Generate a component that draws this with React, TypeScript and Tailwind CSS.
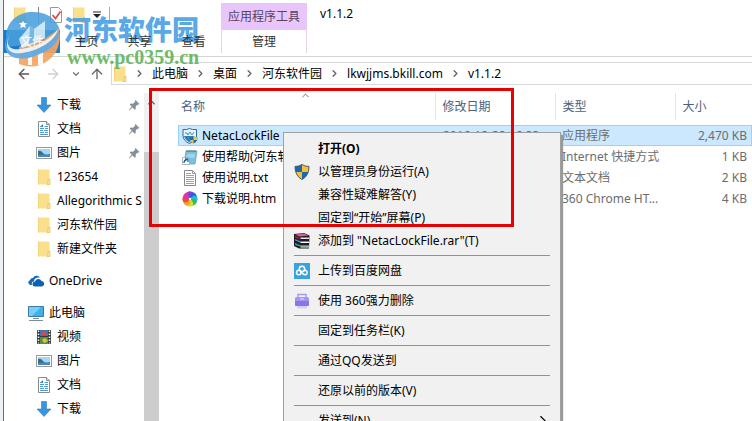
import React from "react";
import { ArrowLeft, ArrowRight, ArrowUp, ChevronDown, ChevronRight, ChevronUp } from "lucide-react";

type IconType = () => React.ReactElement;

const quickAccess: { label: string; icon: IconType; pinned?: boolean }[] = [
  { label: "下载", icon: DownloadIcon, pinned: true },
  { label: "文档", icon: DocumentIcon, pinned: true },
  { label: "图片", icon: PictureIcon, pinned: true },
  { label: "123654", icon: FolderIcon },
  { label: "Allegorithmic S", icon: FolderIcon },
  { label: "河东软件园", icon: FolderIcon },
  { label: "新建文件夹", icon: FolderIcon },
];

const thisPc: { label: string; icon: IconType }[] = [
  { label: "视频", icon: VideoIcon },
  { label: "图片", icon: PictureIcon },
  { label: "文档", icon: DocumentIcon },
  { label: "下载", icon: DownloadIcon },
];

const crumbs = ["此电脑", "桌面", "河东软件园", "lkwjjms.bkill.com", "v1.1.2"];

const files = [
  { name: "NetacLockFile", date: "2016-12-28 16:33", type: "应用程序", size: "2,470 KB", icon: AppIcon, selected: true },
  { name: "使用帮助(河东软件园)", date: "", type: "Internet 快捷方式", size: "1 KB", icon: ShortcutIcon },
  { name: "使用说明.txt", date: "", type: "文本文档", size: "2 KB", icon: TextIcon },
  { name: "下载说明.htm", date: "", type: "360 Chrome HT...", size: "4 KB", icon: PinwheelIcon },
];

const menuGroups: { label: string; icon?: IconType; bold?: boolean; submenu?: boolean }[][] = [
  [
    { label: "打开(O)", bold: true },
    { label: "以管理员身份运行(A)", icon: ShieldIcon },
    { label: "兼容性疑难解答(Y)" },
    { label: "固定到“开始”屏幕(P)" },
    { label: "添加到 \"NetacLockFile.rar\"(T)", icon: RarIcon },
  ],
  [{ label: "上传到百度网盘", icon: CloudIcon }],
  [{ label: "使用 360强力删除", icon: ShredIcon }],
  [{ label: "固定到任务栏(K)" }],
  [{ label: "通过QQ发送到" }],
  [{ label: "还原以前的版本(V)" }],
  [{ label: "发送到(N)", submenu: true }],
];

export default function App() {
  return (
    <div className="relative flex h-screen overflow-hidden bg-[#edf1f3] pl-[3px] font-['Noto_Sans','Noto_Sans_CJK_SC',sans-serif] text-xs text-black">
      <div className="flex min-w-0 flex-1 flex-col border-l border-[#1883d7] bg-white">
        <Ribbon />
        <AddressBar />
        <div className="flex min-h-0 flex-1 pt-2">
          <Sidebar />
          <FileList />
        </div>
      </div>

      <Watermark />
      <ContextMenu />
      {/* highlighted area */}
      <div className="pointer-events-none absolute top-[88px] left-[149px] h-[139px] w-[365px] border-3 border-[#e60000]" />
    </div>
  );
}

/* Window chrome */
function Ribbon() {
  return (
    <header className="shrink-0 border-b border-[#d5d5d5]">
      <div className="flex h-[30px]">
        <div className="flex w-[217px] items-center pl-2">
          <FolderIcon />
          <span className="ml-2.5 h-4 w-px bg-[#888]" />
          <span className="ml-2.5"><CheckPageIcon /></span>
          <span className="ml-2"><FolderIcon /></span>
          <svg className="ml-1.5" width="8" height="8" viewBox="0 0 8 8">
            <path d="M0 1h8" stroke="#222" />
            <path d="M0 3h8L4 7z" fill="#222" />
          </svg>
          <span className="ml-2 h-4 w-px bg-[#aaa]" />
        </div>
        <div className="mt-[3px] flex w-[86px] items-center justify-center bg-[#e8c6fb] text-[#54425f]">应用程序工具</div>
        <h1 className="pt-[6px] pl-[13px]">v1.1.2</h1>
      </div>
      <nav className="flex h-[26px] items-start text-[#333]">
        <button className="h-[23px] w-14 bg-[#1979ca] text-white"><span className="relative z-10">文件</span></button>
        <button className="relative z-10 h-[23px] w-[53px]">主页</button>
        <button className="relative z-10 h-[23px] w-[53px]">共享</button>
        <button className="relative z-10 h-[23px] w-[55px]">查看</button>
        <button className="h-[23px] w-[86px] border-x border-[#e3d3ec]">管理</button>
      </nav>
    </header>
  );
}

function AddressBar() {
  return (
    <div className="mt-[5px] flex h-[23px] shrink-0 items-center pl-3">
      <button aria-label="后退" className="text-[#555]"><ArrowLeft size={16} /></button>
      <button aria-label="前进" className="ml-[13px] text-[#d0d0d0]"><ArrowRight size={16} /></button>
      <button aria-label="历史" className="ml-[10px] text-[#777]"><ChevronDown size={10} strokeWidth={3} /></button>
      <button aria-label="上移" className="ml-2 text-[#666]"><ArrowUp size={16} /></button>
      <ol className="ml-[6px] flex h-full min-w-0 flex-1 items-center border-y border-l border-[#d9d9d9]">
        <li className="w-[15px]"><FolderIcon /></li>
        {crumbs.map((c) => (
          <li key={c} className="flex items-center whitespace-nowrap">
            <ChevronRight className="mx-[7px] text-[#666]" size={11} strokeWidth={3} />
            <a href="#">{c}</a>
          </li>
        ))}
      </ol>
    </div>
  );
}

function Sidebar() {
  return (
    <aside className="flex w-[155px] shrink-0">
      <div className="min-w-0 flex-1 overflow-hidden">
        <div>
          {quickAccess.map((item) => (
            <SideItem key={item.label} {...item} nested />
          ))}
        </div>
        <div className="my-2"><SideItem label="OneDrive" icon={OneDriveIcon} /></div>
        <div>
          <SideItem label="此电脑" icon={ComputerIcon} />
          {thisPc.map((item) => (
            <SideItem key={item.label} {...item} nested />
          ))}
        </div>
      </div>
      <div className="flex w-[15px] flex-col bg-[#f0f0f0]">
        <div className="flex h-[59px] justify-center pt-1"><ChevronUp size={11} strokeWidth={3} color="#555" /></div>
        <div className="flex-1 bg-[#cdcdcd]" />
      </div>
    </aside>
  );
}

function SideItem({ label, icon: Icon, pinned, nested }: { label: string; icon: IconType; pinned?: boolean; nested?: boolean }) {
  return (
    <a href="#" className={`flex h-6 items-center gap-[5px] whitespace-nowrap ${nested ? "pl-8" : "pl-6"}`}>
      <Icon />
      <span>{label}</span>
      {pinned && <span className="mr-1 ml-auto"><PinIcon /></span>}
    </a>
  );
}

function FileList() {
  return (
    <main className="relative min-w-0 flex-1 pl-[19px]">
      <table className="w-full table-fixed border-collapse">
        <thead>
          <tr className="h-[27px] text-left text-[#4c607a]">
            <th className="w-[257px] pl-[3px] font-normal">名称</th>
            <th className="w-[120px] border-l border-[#e5e5e5] pl-[7px] font-normal">修改日期</th>
            <th className="w-[120px] border-l border-[#e5e5e5] pl-[7px] font-normal">类型</th>
            <th className="border-l border-[#e5e5e5] pl-[7px] font-normal">大小</th>
          </tr>
          <tr className="h-[5px]" />
        </thead>
        <tbody>
          {files.map(({ icon: Icon, ...f }) => (
            <tr key={f.name} className={`h-[21px] text-[#6d6d6d] ${f.selected ? "bg-[#cce8ff] outline -outline-offset-1 outline-[#99d1ff]" : ""}`}>
              <td className="overflow-hidden py-0 pl-1 text-black">
                <div className="flex items-center gap-1 whitespace-nowrap"><Icon />{f.name}</div>
              </td>
              <td className="pl-2 whitespace-nowrap">{f.date}</td>
              <td className="pl-[7px] whitespace-nowrap">{f.type}</td>
              <td className="pr-[5px] text-right whitespace-nowrap">{f.size}</td>
            </tr>
          ))}
        </tbody>
      </table>
      <ChevronUp className="absolute -top-[3px] left-[141px]" size={11} color="#666" />
    </main>
  );
}

function ContextMenu() {
  return (
    <div role="menu" className="absolute top-[132px] left-[283px] w-[278px] border border-[#a0a0a0] bg-[#f1f1f1] py-1 shadow-[2px_3px_1px_#999]">
      {menuGroups.map((group, i) => (
        <div key={i}>
          {i > 0 && <div className="mx-[10px] flex h-[7px] items-center"><span className="h-px w-full bg-[#919191]" /></div>}
          {group.map(({ icon: Icon, ...m }) => (
            <button key={m.label} role="menuitem" className={`flex h-[23px] w-full items-center pr-2 pl-[10px] text-left whitespace-nowrap ${m.bold ? "font-bold" : ""}`}>
              <span className="w-6">{Icon && <Icon />}</span>
              <span>{m.label}</span>
              {m.submenu && <ChevronRight className="ml-auto" size={18} strokeWidth={1.5} />}
            </button>
          ))}
        </div>
      ))}
    </div>
  );
}

function Watermark() {
  return (
    <div className="pointer-events-none absolute top-[9px] left-1 flex gap-[3px]">
      <svg width="57" height="59" viewBox="0 0 57 59">
        {/* dome */}
        <path d="M2 25C4 11 15 3 29 3s24 7 27 19L44 29 20 36 4 38z" fill="#4a9fdc" fillOpacity="0.88" />
        {/* base */}
        <path d="M55 20c3 15-3 27-13 33-9 6-19 5-27 2V38l24-7z" fill="#f3a562" fillOpacity="0.92" />
        <path d="M24 44h4v12h-4zM34 43h5v13h-5z" fill="#fff" fillOpacity="0.9" />
        {/* towers */}
        <path d="m15 30 11-13 4 3 11-8v17l-8 5-15 5z" fill="#f4f9fd" fillOpacity="0.75" />
        <path d="m26 17 4 3v13l-5 2z" fill="#5ca8de" fillOpacity="0.75" />
        {/* orbit */}
        <path d="M6 25C-2 36 3 43 17 42c16-1 34-10 37-21 4 12-9 22-26 27C13 52 1 48 1 36c0-5 2-8 5-11z" fill="#64aae1" fillOpacity="0.95" />
        <path d="M7 25C0 35 5 42 17 40c16-2 30-10 37-20-3 13-21 22-36 24C3 46-1 36 7 25z" fill="#f2f8fd" fillOpacity="0.9" />
        <path d="m19 12 1.300 2 2.700.3-2 2 .8 2.700-2.800-1.300-2.800 1.300.8-2.700-2-2 2.700-.3z" fill="#fff" />
      </svg>
      <div className="pt-[5px]">
        <div className="text-[27px] leading-8 font-black text-[#4a9fe5] opacity-90">河东软件园</div>
        <div className="pl-[3px] font-['Liberation_Serif',serif] text-[20px] leading-[22px] font-bold text-[#60b558] opacity-90">www.pc0359.cn</div>
      </div>
    </div>
  );
}

/* Icons */
function FolderIcon() {
  return (
    <svg className="shrink-0" width="16" height="16" viewBox="0 0 16 16">
      <path d="M2 .5h11.500v15H2z" fill="#fbe08c" />
      <path d="M2 .5h1v15H2z" fill="#f3d47a" />
      <path d="M12 10.500h2v5h-3l1-1.500z" fill="#fbe8a8" stroke="#e3bd55" strokeWidth=".7" />
    </svg>
  );
}

function DownloadIcon() {
  return (
    <svg className="shrink-0" width="16" height="16" viewBox="0 0 16 16">
      <path d="M5.500.5h5V8H15l-7 7.500L1 8h4.500z" fill="#3c94dc" stroke="#2a7fc6" strokeWidth=".6" />
    </svg>
  );
}

function DocumentIcon() {
  return (
    <svg className="shrink-0" width="16" height="16" viewBox="0 0 16 16">
      <path d="M2.500.5h8l3 3v12h-11z" fill="#fff" stroke="#8b8b8b" />
      <path d="M10.500.5v3h3" fill="#ddd" stroke="#8b8b8b" />
      <path d="M4 5.500h3M8.500 5.500H12M4 7.500h4M9 7.500h3M4 9.500h3M8 9.500h4M4 11.500h4M9 11.500h3M4 13.500h8" stroke="#4d9bce" />
      <path d="M5 5 7 3v3z" fill="#367db0" />
    </svg>
  );
}

function PictureIcon() {
  return (
    <svg className="shrink-0" width="16" height="16" viewBox="0 0 16 16">
      <rect x=".5" y="2.500" width="15" height="11" fill="#fff" stroke="#999" />
      <rect x="2" y="4" width="12" height="8" fill="#a6d6f5" />
      <path d="M2 6q3-1 5 2t7 1v3H2z" fill="#376e82" />
      <path d="M2 10q5-1 12 0v2H2z" fill="#4a86c0" />
    </svg>
  );
}

function VideoIcon() {
  return (
    <svg className="shrink-0" width="16" height="16" viewBox="0 0 16 16">
      <path d="M1 1h14v14H1z" fill="#36383b" />
      <path d="M4 1h8v6H4z" fill="#3c78b9" />
      <path d="M4 8h8v7H4z" fill="#4d9444" />
      <path d="M5 4 8 2l3 4H6z" fill="#d94b4b" />
      <path d="m6 11 3-2 3 3-4 2z" fill="#e4bd43" />
      <path d="M2.500 1.500v13M13.500 1.500v13" stroke="#fff" strokeWidth="1.500" strokeDasharray="1.500 1.500" />
    </svg>
  );
}

function ComputerIcon() {
  return (
    <svg className="shrink-0" width="16" height="16" viewBox="0 0 16 16">
      <path d="M.5 1.500h15v10H.5z" fill="#43b0ea" stroke="#397ba6" />
      <path d="M1 2h12L4 11H1z" fill="#77cff6" />
      <path d="M5 13.500h6M1 15.500h14" stroke="#7c8c98" />
    </svg>
  );
}

function OneDriveIcon() {
  return (
    <svg className="shrink-0" width="16" height="16" viewBox="0 0 16 16">
      <path d="M4 12H2.500A2.500 2.500 0 0 1 2 7.200 3 3 0 0 1 5 5a4.200 4.200 0 0 1 7-.5C8 4 6 6 6.200 8 4 8.500 3.500 10 4 12z" fill="#1169b5" />
      <path d="M7 13.500a2.500 2.500 0 0 1 0-5 3.500 3.500 0 0 1 6.500-.5 2.800 2.800 0 0 1 .5 5.500z" fill="#0b62b0" />
    </svg>
  );
}

function PinIcon() {
  return (
    <svg width="11" height="11" viewBox="0 0 11 11">
      <path d="m6.500 0 4 4-1 .8-.8-.2-2 2 .1 2.200-1 1-2.300-2.300L.5 10.500 0 10l2.800-3.200L.7 4.600l1-1 2.300.1 2-2L5.800 1z" fill="#84919c" />
    </svg>
  );
}

function CheckPageIcon() {
  return (
    <svg width="14" height="16" viewBox="0 0 14 16">
      <path d="M1.500.5h8l3 3v12h-11z" fill="#fff" stroke="#999" />
      <path d="m3.500 8 3 3.500 5-7" fill="none" stroke="#d65344" strokeWidth="1.800" />
    </svg>
  );
}

function AppIcon() {
  return (
    <svg className="shrink-0" width="16" height="16" viewBox="0 0 16 16">
      <path d="M1 1.500Q5 2 7.500.5 10 2 14.500 1.500V8q-1 5-7 7.500Q1.500 13 1 8z" fill="#e9f4fb" stroke="#286b9d" />
      <path d="M2 8h10l-4 6.500Q3 12 2 8z" fill="#2b83bc" />
      <path d="M3 5h2l1 2 2-3 2 3 2-3" fill="none" stroke="#4b8db9" />
      <path d="M8 9.500q2 0 3.500-1.500Q13 9.500 15.500 9.500q0 4.500-4 6-3.500-1.500-3.500-6z" fill="#2766b4" />
      <path d="M11.500 8q1.500 1.500 4 1.500V12h-4zM8.200 12h3.300v3.500q-2.800-1-3.300-3.500z" fill="#f7c844" />
    </svg>
  );
}

function ShortcutIcon() {
  return (
    <svg className="shrink-0" width="16" height="16" viewBox="0 0 16 16">
      <path d="M4 2h11l-2 13H2z" fill="#79c2dc" stroke="#6298aa" strokeWidth=".7" />
      <path d="M5 1v2M7 1v2M9 1v2M11 1v2M13 1v2" stroke="#577" />
      <path d="M5 6h8M4.500 8h8" stroke="#c7e9f4" />
      <path d="M.5 8.500h7v7h-7z" fill="#fff" stroke="#999" strokeWidth=".7" />
      <path d="M2 14q0-3 3-3.500M3 10h3v3" fill="none" stroke="#2460a7" strokeWidth="1.300" />
    </svg>
  );
}

function TextIcon() {
  return (
    <svg className="shrink-0" width="16" height="16" viewBox="0 0 16 16">
      <path d="M2.500.5h8l3 3v12h-11z" fill="#fff" stroke="#888" />
      <path d="M10.500.5v3h3M4 3.500h5M4 5.500h8M4 7.500h8M4 9.500h8M4 11.500h8M4 13.500h8" fill="none" stroke="#a0a0a0" />
    </svg>
  );
}

function PinwheelIcon() {
  const colors = ["#8540da", "#345fe0", "#29b8d8", "#3fb94b", "#d9dc35", "#f5a623", "#f04a3c", "#df36a5"];
  return (
    <svg className="shrink-0" width="16" height="16" viewBox="0 0 16 16">
      {colors.map((c, i) => (
        <path key={c} d="M8 8Q3.500 5 5 1.500 8-1 12 2 8.500 3 8 8z" fill={c} transform={`rotate(${i * 45} 8 8)`} />
      ))}
      <circle cx="8" cy="8" r="1.200" fill="#fff" />
    </svg>
  );
}

function ShieldIcon() {
  return (
    <svg width="16" height="16" viewBox="0 0 16 16">
      <path d="M1 2.500Q5 2.500 8 .5q3 2 7 2 0 9.500-7 13-7-3.500-7-13z" fill="#fbc02d" />
      <path d="M1 2.500Q5 2.500 8 .5V8H1.800Q1 5.500 1 2.500zM8 8h6.200Q12.500 13 8 15.500z" fill="#1669b8" />
      <path d="M1 2.500Q5 2.500 8 .5q3 2 7 2 0 9.500-7 13-7-3.500-7-13z" fill="none" stroke="#4d5a61" />
    </svg>
  );
}

function RarIcon() {
  return (
    <svg width="16" height="16" viewBox="0 0 16 16">
      <path d="M0 1 10 0l5.500 2.500L15 15.500H5L0 13z" fill="#211a22" />
      <path d="m1 1.500 9-1 4.500 2-9 1z" fill="#d0609c" />
      <path d="m1 2.500 4.500 2v2L1 4.500z" fill="#8e204f" />
      <path d="M6.500 4.500H15v1.500H6.500z" fill="#f3dfe7" />
      <path d="m1 6 5 2h9v1.500H6L1 7.500z" fill="#4688d9" />
      <path d="M6.500 9H15v1H6.500z" fill="#fff" />
      <path d="m1 10 5 2h9v1.500H6L1 12z" fill="#21a978" />
      <path d="M6.500 13.500H15v1H6.500z" fill="#fff" />
    </svg>
  );
}

function CloudIcon() {
  return (
    <svg width="16" height="16" viewBox="0 0 16 16">
      <path d="M0 0h16v16H0z" fill="#35a5df" />
      <g fill="none" stroke="#fff" strokeWidth="1.500">
        <circle cx="8" cy="6" r="2.700" />
        <circle cx="4.800" cy="9.500" r="2.300" />
        <path d="M7 8.500q2 3.500 4 3.300a2.300 2.300 0 1 0-2-3.600" />
      </g>
    </svg>
  );
}

function ShredIcon() {
  return (
    <svg width="16" height="16" viewBox="0 0 16 16">
      <path d="M4 5V1.500h8V5" fill="none" stroke="#a99bf2" strokeWidth="1.500" />
      <rect x="1" y="4" width="14" height="9" rx="1.500" fill="#a396f3" />
      <path d="M1 8h14v4q0 1-1 1H2q-1 0-1-1z" fill="#8676ea" />
      <path d="M3 13h10v2.500H3z" fill="#d3ccfb" />
      <path d="M6 6h4" stroke="#e8e4ff" />
    </svg>
  );
}
